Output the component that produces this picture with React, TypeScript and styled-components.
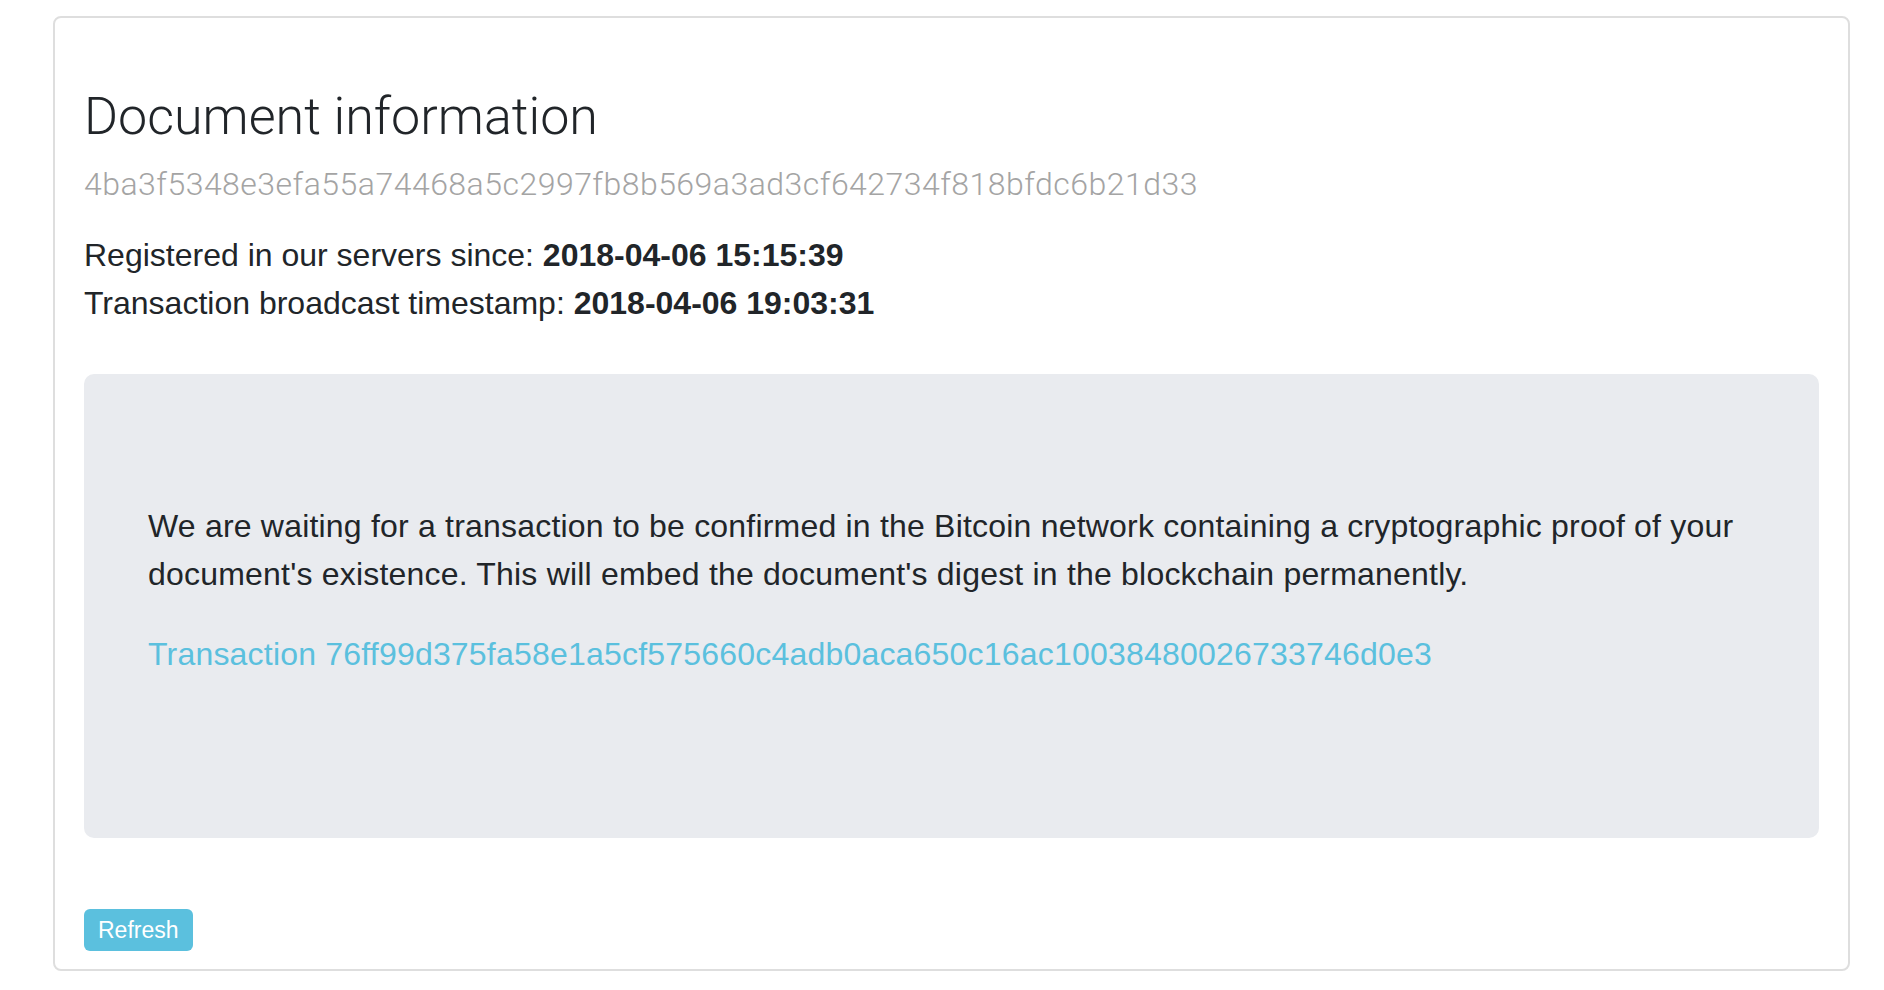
import React from "react";
import styled, { createGlobalStyle } from "styled-components";

const Global = createGlobalStyle`
  html, body {
    margin: 0;
    padding: 0;
    background: #ffffff;
  }
  body {
    font-family: "Liberation Sans", Arial, sans-serif;
    color: #212529;
  }
  * { box-sizing: border-box; }
`;

const Page = styled.div`
  padding: 16px 34px 20px 53px;
`;

const Card = styled.section`
  border: 2px solid #dedede;
  border-radius: 8px;
  padding: 68px 29px 18px 29px;
  background: #fff;
`;

const Title = styled.h1`
  margin: 0 0 12px 0;
  font-family: Roboto, "Liberation Sans", sans-serif;
  font-weight: 300;
  font-size: 52px;
  line-height: 62px;
  color: #212529;
`;

const Hash = styled.p`
  margin: 0 0 23px 0;
  font-family: Roboto, "Liberation Sans", sans-serif;
  font-weight: 300;
  font-size: 32px;
  line-height: 48px;
  letter-spacing: 0.48px;
  color: #a4a4a4;
`;

const Meta = styled.div`
  margin: 0 0 47px 0;
  font-size: 32px;
  line-height: 48px;
`;

const MetaLine = styled.div`
  strong {
    font-weight: 700;
  }
`;

const Jumbotron = styled.div`
  background: #e9ebef;
  border-radius: 10px;
  padding: 128px 64px 128px 64px;
`;

const Paragraph = styled.p`
  margin: 0 0 32px 0;
  font-size: 32px;
  line-height: 48px;
  letter-spacing: 0.2px;
  color: #212529;
`;

const TxLink = styled.a`
  color: #5bc0de;
  text-decoration: none;
`;

const Footer = styled.div`
  margin-top: 71px;
  display: flex;
`;

const Button = styled.button`
  font-family: "Liberation Sans", Arial, sans-serif;
  font-size: 23px;
  line-height: 30px;
  padding: 6px 14px;
  color: #fff;
  background: #5bc0de;
  border: none;
  border-radius: 6px;
  cursor: pointer;
`;

export default function App() {
  return (
    <>
      <Global />
      <Page>
        <Card>
          <Title>Document information</Title>
          <Hash>4ba3f5348e3efa55a74468a5c2997fb8b569a3ad3cf642734f818bfdc6b21d33</Hash>
          <Meta>
            <MetaLine>
              Registered in our servers since: <strong>2018-04-06 15:15:39</strong>
            </MetaLine>
            <MetaLine>
              Transaction broadcast timestamp: <strong>2018-04-06 19:03:31</strong>
            </MetaLine>
          </Meta>
          <Jumbotron>
            <Paragraph>
              We are waiting for a transaction to be confirmed in the Bitcoin network containing a
              cryptographic proof of your document's existence. This will embed the document's
              digest in the blockchain permanently.
            </Paragraph>
            <Paragraph>
              <TxLink href="#">
                Transaction 76ff99d375fa58e1a5cf575660c4adb0aca650c16ac10038480026733746d0e3
              </TxLink>
            </Paragraph>
          </Jumbotron>
          <Footer>
            <Button>Refresh</Button>
          </Footer>
        </Card>
      </Page>
    </>
  );
}
